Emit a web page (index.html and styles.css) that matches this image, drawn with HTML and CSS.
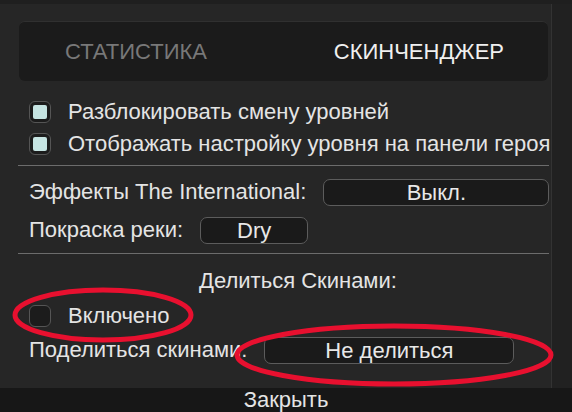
FILE: index.html
```html
<!DOCTYPE html>
<html lang="ru">
<head>
    <meta charset="UTF-8">
    <meta name="viewport" content="width=device-width, initial-scale=1.0">
    <title>Скинченджер</title>
    <link rel="stylesheet" href="styles.css">
</head>
<body>

    <div class="screen">
        <div class="main">
            <div class="panel">

                <!-- Tabs -->
                <div class="tabs">
                    <span class="tab">СТАТИСТИКА</span>
                    <span class="tab active">СКИНЧЕНДЖЕР</span>
                </div>

                <!-- Level options -->
                <div class="options">
                    <label class="check-row">
                        <span class="checkbox checked"></span>
                        <span>Разблокировать смену уровней</span>
                    </label>
                    <label class="check-row">
                        <span class="checkbox checked"></span>
                        <span>Отображать настройку уровня на панели героя</span>
                    </label>
                </div>

                <div class="divider"></div>

                <!-- Effects -->
                <div class="settings">
                    <div class="setting-row">
                        <span class="label">Эффекты The International:</span>
                        <button class="drop wide">Выкл.</button>
                    </div>
                    <div class="setting-row">
                        <span class="label">Покраска реки:</span>
                        <button class="drop small">Dry</button>
                    </div>
                </div>

                <div class="divider second"></div>

                <!-- Skin sharing -->
                <div class="share">
                    <div class="share-title">Делиться Скинами:</div>
                    <label class="check-row">
                        <span class="checkbox"></span>
                        <span>Включено</span>
                    </label>
                    <div class="setting-row">
                        <span class="label">Поделиться скинами:</span>
                        <button class="drop share-drop">Не делиться</button>
                    </div>
                </div>

            </div>
            <div class="side"></div>
        </div>

        <div class="footer">Закрыть</div>

        <!-- red marks drawn over the screenshot -->
        <svg class="marks" width="572" height="412" viewBox="0 0 572 412">
            <ellipse cx="103" cy="315" rx="88" ry="25" />
            <ellipse cx="394" cy="355" rx="157" ry="29" />
        </svg>
    </div>

</body>
</html>
```

FILE: styles.css
```css
body {
    margin: 0;
    background-color: #1f1f1f;
    font-family: "Liberation Sans", Arial, sans-serif;
    color: #e4e4e4;
}

.screen {
    position: relative;
    width: 572px;
    height: 412px;
    display: flex;
    flex-direction: column;
    overflow: hidden;
}

.main {
    flex: 1;
    display: flex;
}

.panel {
    width: 551px;
    margin-top: 4px;
    background-color: #262626;
    padding: 17px 0 0 19px;
    box-sizing: border-box;
}

.side {
    flex: 1;
    background-color: #212121;
    border-left: 1px solid #333;
    margin-top: 4px;
}

.tabs {
    width: 529px;
    height: 60px;
    background-color: #1b1b1b;
    border-radius: 6px;
    border-top: 1px solid #303030;
    display: flex;
    align-items: center;
    font-size: 22px;
    box-sizing: border-box;
}

.tab {
    color: #787878;
    margin-left: 46px;
}

.tab.active {
    color: #f0f0f0;
    margin-left: auto;
    margin-right: 44px;
}

.options {
    padding: 15px 0 0 10px;
}

.check-row {
    display: flex;
    align-items: center;
    height: 32px;
    font-size: 22px;
}

.checkbox {
    width: 22px;
    height: 22px;
    box-sizing: border-box;
    border: 1px solid #555;
    border-radius: 6px;
    background-color: #1c1c1c;
    margin-right: 17px;
    padding: 3px;
}

.checkbox.checked::after {
    content: "";
    display: block;
    width: 14px;
    height: 14px;
    border-radius: 2px;
    background-color: #c6e4e2;
}

.divider {
    height: 1px;
    width: 531px;
    background-color: #6c6c6c;
    margin: 5px 0 0 -1px;
}

.divider.second {
    margin-top: 4px;
}

.settings {
    padding: 7px 0 0 10px;
}

.setting-row {
    display: flex;
    align-items: center;
    height: 38px;
    font-size: 22px;
}

.label {
    margin-right: 17px;
}

.drop {
    height: 27px;
    background-color: #1a1a1a;
    border: 1px solid #5c5c5c;
    border-radius: 7px;
    color: #e8e8e8;
    font-family: inherit;
    font-size: 22px;
    padding: 0;
}

.drop.wide {
    width: 226px;
}

.drop.small {
    width: 108px;
}

.drop.share-drop {
    width: 250px;
}

.share {
    padding: 14px 0 0 10px;
}

.share-title {
    font-size: 22px;
    text-align: center;
    padding-left: 16px;
    height: 32px;
}

.share .setting-row {
    height: 36px;
}

.footer {
    height: 24px;
    background-color: #171717;
    text-align: center;
    font-size: 22px;
    line-height: 24px;
    color: #e4e4e4;
}

.marks {
    position: absolute;
    left: 0;
    top: 0;
    pointer-events: none;
}

.marks ellipse {
    fill: none;
    stroke: #e8102f;
    stroke-width: 5;
}
```
